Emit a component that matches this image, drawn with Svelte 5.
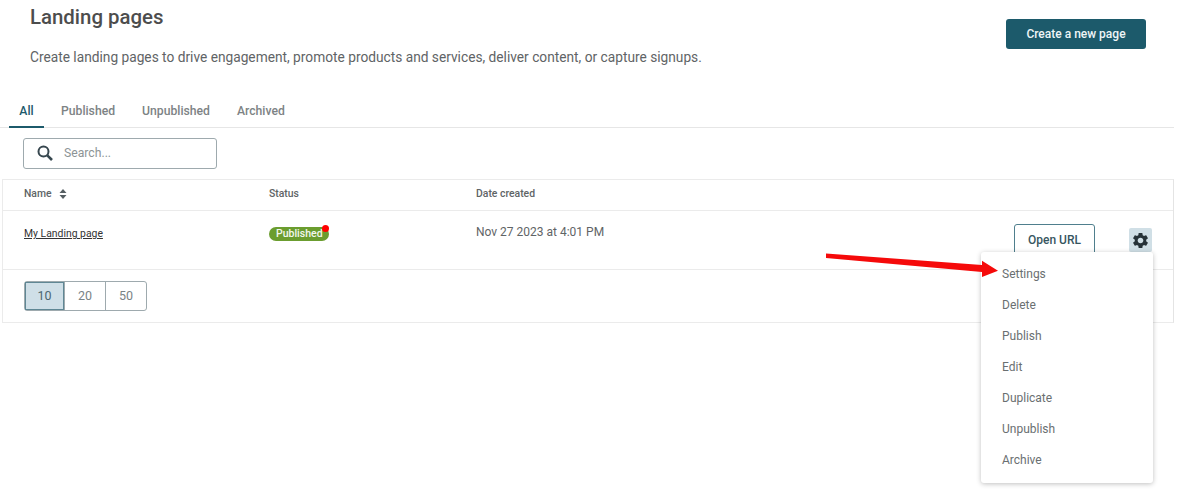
<script>
	const tabs = ['All', 'Published', 'Unpublished', 'Archived'];
	const sizes = [10, 20, 50];
	const menu = ['Settings', 'Delete', 'Publish', 'Edit', 'Duplicate', 'Unpublish', 'Archive'];
</script>

<main class="page">
	<header class="top">
		<div>
			<h1>Landing pages</h1>
			<p>Create landing pages to drive engagement, promote products and services, deliver content, or capture signups.</p>
		</div>
		<button class="create">Create a new page</button>
	</header>

	<nav class="tabs">
		{#each tabs as tab, i}
			<span class="tab" class:active={i === 0}>{tab}</span>
		{/each}
	</nav>

	<div class="search">
		<svg width="16" height="16" viewBox="0 0 16 16" fill="none" stroke="#37474f" stroke-width="2">
			<circle cx="6.5" cy="6.5" r="5" />
			<path d="M10.3 10.3 15 15" stroke-width="2.6" />
		</svg>
		<span>Search...</span>
	</div>

	<section class="table">
		<div class="row head">
			<div class="name">
				Name
				<svg width="8" height="10" viewBox="0 0 8 10" fill="#555e62">
					<path d="M4 0 7.5 4H.5zM4 10 .5 6h7z" />
				</svg>
			</div>
			<div>Status</div>
			<div>Date created</div>
		</div>
		<div class="row body">
			<div class="name"><span class="link">My Landing page</span></div>
			<div class="status">
				<span class="badge">Published<i></i></span>
			</div>
			<div class="date">Nov 27 2023 at 4:01 PM</div>
			<div class="actions">
				<button class="open">Open URL</button>
				<div class="gear">
					<svg width="19" height="19" viewBox="0 0 24 24" fill="#263238">
						<path d="M19.14 12.94c.04-.3.06-.61.06-.94 0-.32-.02-.64-.07-.94l2.03-1.58c.18-.14.23-.41.12-.61l-1.92-3.32c-.12-.22-.37-.29-.59-.22l-2.39.96c-.5-.38-1.03-.7-1.62-.94l-.36-2.54c-.04-.24-.24-.41-.48-.41h-3.84c-.24 0-.43.17-.47.41l-.36 2.54c-.59.24-1.13.57-1.62.94l-2.39-.96c-.22-.08-.47 0-.59.22L2.74 8.87c-.12.21-.08.47.12.61l2.03 1.58c-.05.3-.09.63-.09.94s.02.64.07.94l-2.03 1.58c-.18.14-.23.41-.12.61l1.92 3.32c.12.22.37.29.59.22l2.39-.96c.5.38 1.03.7 1.62.94l.36 2.54c.05.24.24.41.48.41h3.84c.24 0 .44-.17.47-.41l.36-2.54c.59-.24 1.13-.56 1.62-.94l2.39.96c.22.08.47 0 .59-.22l1.92-3.32c.12-.22.07-.47-.12-.61l-2.01-1.58zM12 15.6c-1.98 0-3.6-1.62-3.6-3.6s1.62-3.6 3.6-3.6 3.6 1.62 3.6 3.6-1.62 3.6-3.6 3.6z" />
					</svg>
				</div>
			</div>
			<ul class="menu">
				{#each menu as item}
					<li>{item}</li>
				{/each}
			</ul>
		</div>
		<div class="foot">
			<div class="sizes">
				{#each sizes as size, i}
					<span class="size" class:current={i === 0}>{size}</span>
				{/each}
			</div>
		</div>
	</section>

	<svg class="arrow" width="180" height="30" viewBox="0 0 180 30">
		<path d="M0 .5 156 12V7.700L172 17.700 156 24V19L0 5z" fill="#f50a0a" />
	</svg>
</main>

<style>
	:global(body) {
		margin: 0;
		background: #fff;
	}

	.page {
		position: relative;
		height: 492px;
		overflow: hidden;
		font-family: Roboto, 'Liberation Sans', sans-serif;
		color: #555;
	}

	.top {
		display: flex;
		justify-content: space-between;
		align-items: flex-start;
		height: 94px;
		padding: 0 34px 0 30px;
	}

	h1 {
		margin: 5px 0 0;
		font-size: 20.4px;
		line-height: 24px;
		font-weight: 500;
		color: #4d4d4d;
	}

	.top p {
		margin: 18px 0 0;
		font-size: 13.72px;
		line-height: 20px;
		color: #5f6466;
	}

	.create {
		width: 140px;
		height: 30px;
		margin-top: 19px;
		border: 0;
		border-radius: 3px;
		background: #1c5a6b;
		color: #eef5f7;
		font: 500 12px Roboto, sans-serif;
	}

	.tabs {
		display: flex;
		height: 33px;
		margin: 0 6px 0 0;
		padding-left: 9px;
		border-bottom: 1px solid #e6e6e6;
	}

	.tab {
		padding: 10px 0 0;
		margin: 0 27px 0 0;
		font-size: 12.2px;
		font-weight: 500;
		line-height: 15px;
		color: #7d8385;
	}

	.tab.active {
		width: 35px;
		height: 22px;
		margin: 0 17px 0 0;
		text-align: center;
		color: #1c5a6b;
		border-bottom: 2px solid #1c5a6b;
	}

	.search {
		display: flex;
		align-items: center;
		gap: 11px;
		width: 194px;
		height: 31px;
		box-sizing: border-box;
		margin: 10px 0 10px 23px;
		padding: 0 0 2px 13px;
		border: 1px solid #9eaaae;
		border-radius: 3px;
		font-size: 12.2px;
		color: #8d9496;
	}

	.table {
		margin: 0 6px 0 2px;
		border: 1px solid #ebebeb;
		border-right-color: #e4e4e4;
		height: 144px;
		box-sizing: border-box;
	}

	.row {
		display: grid;
		grid-template-columns: 245px 207px 1fr auto;
		padding-left: 21px;
		position: relative;
		font-size: 10.4px;
	}

	.head {
		height: 27px;
		padding-bottom: 3px;
		align-items: center;
		border-bottom: 1px solid #ebebeb;
		grid-template-columns: 245px 207px 1fr;
		font-weight: 500;
		color: #5e6466;
	}

	.head .name {
		display: flex;
		align-items: center;
		gap: 7px;
	}

	.body {
		height: 43px;
		border-bottom: 1px solid #ebebeb;
		padding-top: 15px;
	}

	.link {
		text-decoration: underline;
		color: #333;
		line-height: 16px;
	}

	.status {
		line-height: 16px;
	}

	.badge {
		position: relative;
		display: inline-block;
		padding: 0 6px 0 7px;
		height: 14px;
		line-height: 14px;
		margin-top: 1px;
		border-radius: 7px;
		background: #6b9d2f;
		color: #f3f7ee;
		font-size: 10.5px;
		font-weight: 500;
	}

	.badge i {
		position: absolute;
		top: -2px;
		right: 0;
		width: 7px;
		height: 7px;
		border-radius: 50%;
		background: #f00;
	}

	.date {
		font-size: 12px;
		line-height: 14px;
		margin-top: -1px;
		color: #5f6466;
	}

	.actions {
		display: flex;
		align-items: flex-start;
		gap: 34px;
		margin: -2px 21px 0 0;
	}

	.open {
		width: 81px;
		height: 31px;
		background: #fff;
		border: 1px solid #4f7f8d;
		border-radius: 3px;
		color: #37565f;
		font: 500 12px Roboto, sans-serif;
	}

	.gear {
		display: flex;
		align-items: center;
		justify-content: center;
		width: 23px;
		height: 24px;
		margin-top: 4px;
		border-radius: 2px;
		background: #d0dfe6;
	}

	.menu {
		position: absolute;
		z-index: 2;
		top: 41px;
		right: 20px;
		width: 172px;
		height: 231px;
		box-sizing: border-box;
		margin: 0;
		padding: 7px 0 0 21px;
		list-style: none;
		background: #fff;
		border-radius: 3px;
		box-shadow: 0 1px 5px rgba(0, 0, 0, 0.25);
		font-size: 12px;
		color: #6a6f71;
	}

	.menu li {
		height: 31px;
		line-height: 30px;
	}

	.foot {
		padding: 11px 0 0 21px;
	}

	.sizes {
		display: inline-flex;
		height: 30px;
		box-sizing: border-box;
		border: 1px solid #9eaaae;
		border-radius: 3px;
	}

	.size {
		width: 41px;
		box-sizing: border-box;
		line-height: 28px;
		text-align: center;
		font-size: 12.5px;
		color: #7a8386;
		border-left: 1px solid #9eaaae;
	}

	.size:first-child {
		width: 39px;
		border-left: 0;
	}

	.size.current {
		background: #cfdfe7;
		color: #4c6770;
		outline: 1px solid #5f8794;
		outline-offset: -1px;
	}

	.arrow {
		position: absolute;
		z-index: 3;
		left: 826px;
		top: 253px;
	}
</style>
